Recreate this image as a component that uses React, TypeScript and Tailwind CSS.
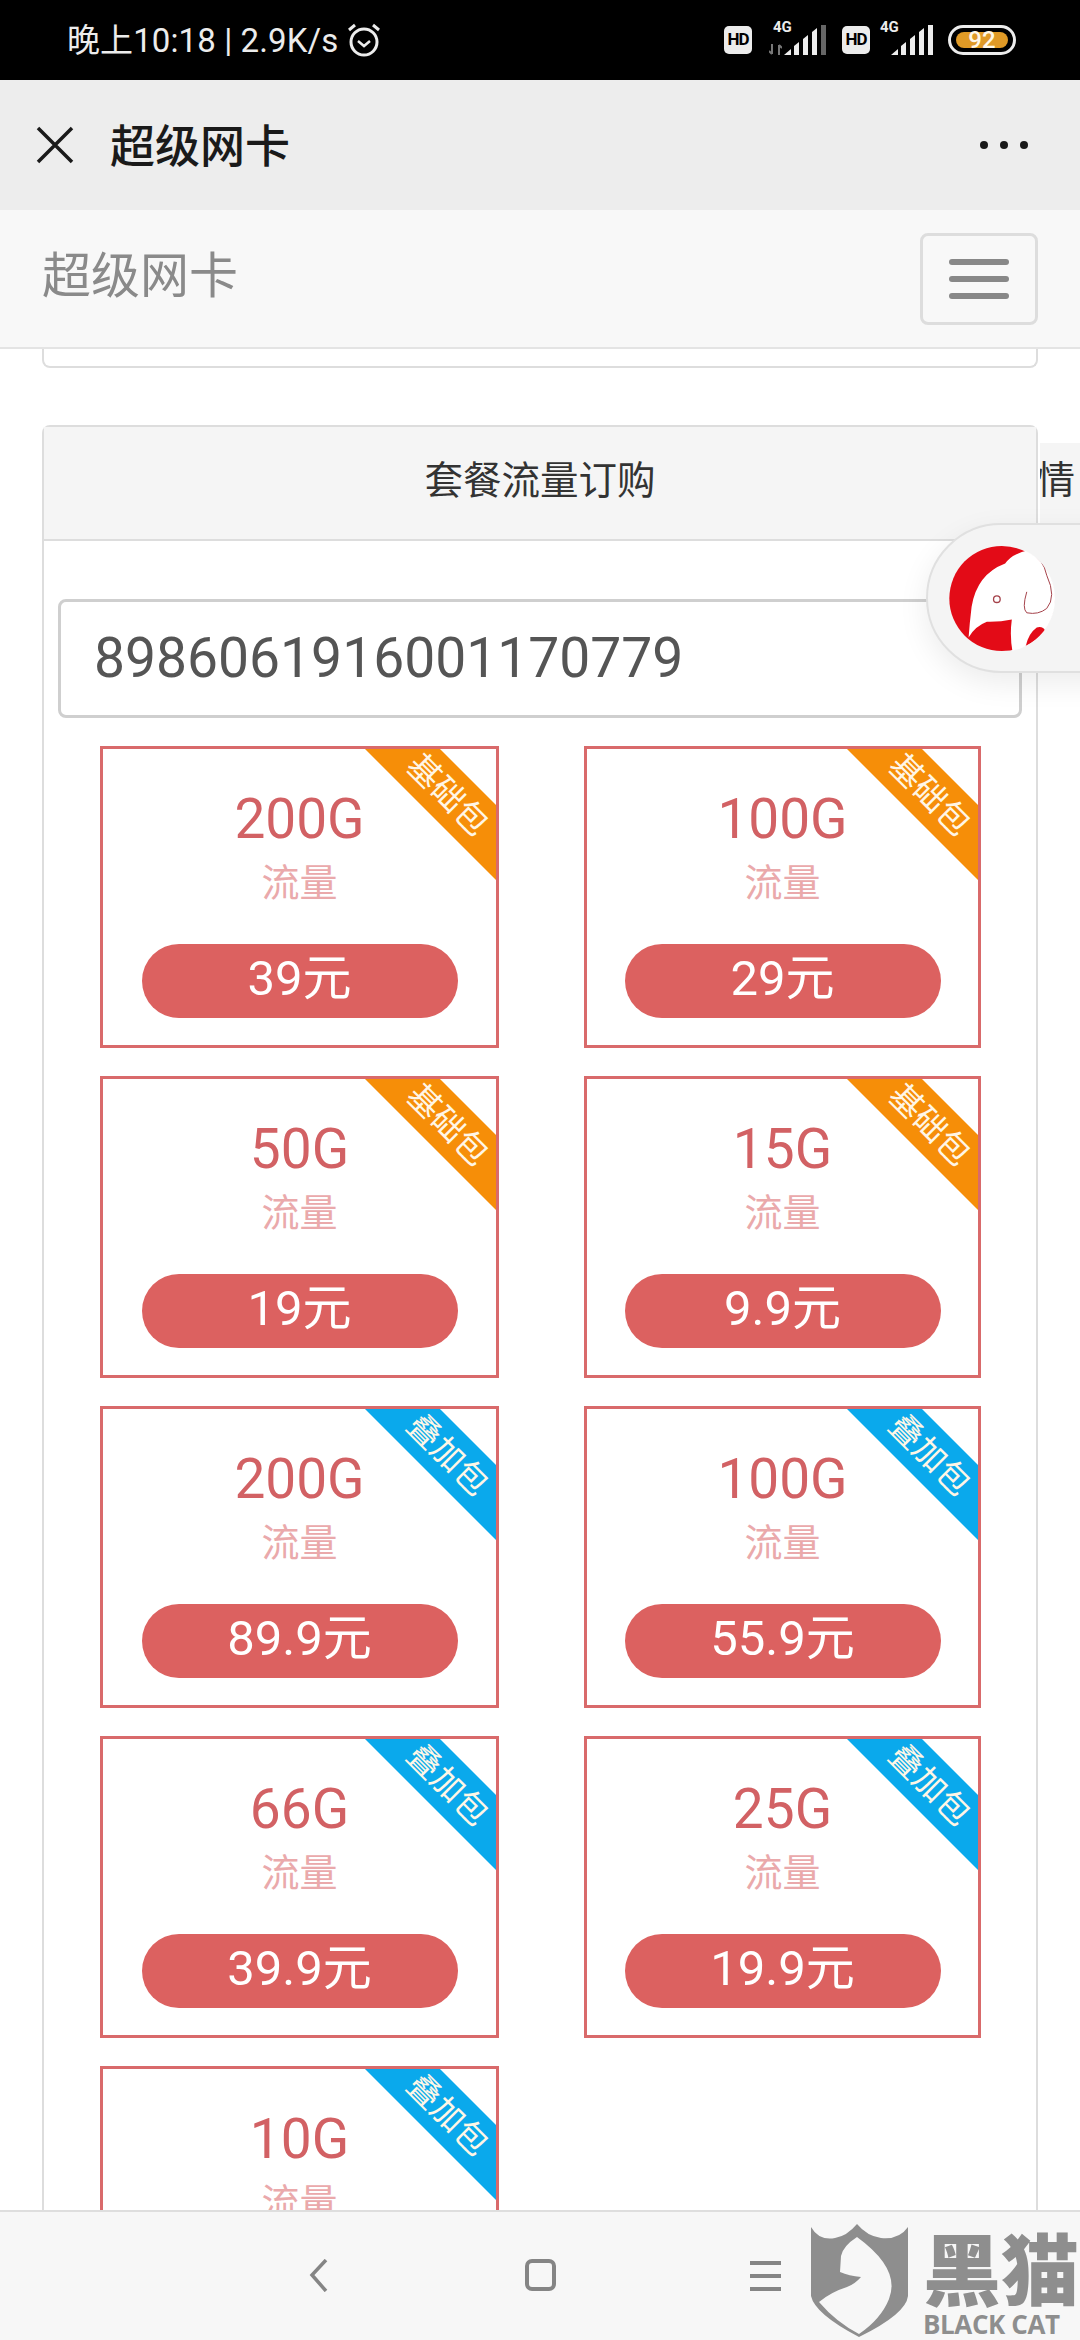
import React from 'react';

type Plan = {
  size: string;
  price: string;
  kind: 'base' | 'extra';
};

const plans: Plan[] = [
  { size: '200G', price: '39元', kind: 'base' },
  { size: '100G', price: '29元', kind: 'base' },
  { size: '50G', price: '19元', kind: 'base' },
  { size: '15G', price: '9.9元', kind: 'base' },
  { size: '200G', price: '89.9元', kind: 'extra' },
  { size: '100G', price: '55.9元', kind: 'extra' },
  { size: '66G', price: '39.9元', kind: 'extra' },
  { size: '25G', price: '19.9元', kind: 'extra' },
  { size: '10G', price: '19.9元', kind: 'extra' },
];

const font = "font-['Roboto','Noto_Sans_CJK_SC',sans-serif]";

// 信号格
const Signal = ({ dim }: { dim?: boolean }) => (
  <svg width="42" height="30" viewBox="0 0 42 30" fill="#ececec">
    <path d="M0 30 L7 24 V30 Z" />
    <path d="M10 21 L15 17 V30 H10 Z" />
    <path d="M19 14 L24 10 V30 H19 Z" />
    <path d="M28 7 L33 3 V30 H28 Z" />
    <path d="M37 0 H42 V30 H37 Z" fill={dim ? '#666666' : '#ececec'} />
  </svg>
);

const HdBadge = () => (
  <div className="flex h-[28px] w-[28px] items-center justify-center rounded-[5px] bg-[#ececec] font-['Roboto',sans-serif] text-[17px] font-bold tracking-[-1px] text-black">
    HD
  </div>
);

const StatusBar = () => (
  <div className={`flex h-[80px] shrink-0 items-center bg-black pl-[67px] pr-[64px] text-[#ececec] ${font}`}>
    <span className="whitespace-nowrap pt-[2px] text-[33px] tracking-[0.1px]">晚上10:18 | 2.9K/s</span>
    <svg className="ml-[8px]" width="36" height="36" viewBox="0 0 36 36" fill="none" stroke="#ececec" strokeWidth="3">
      <circle cx="18" cy="20" r="13" />
      <path d="M12 19 L18 24 L24 19" strokeWidth="2.5" />
      <path d="M3 8 L9 3 M33 8 L27 3" />
    </svg>
    <div className="ml-auto flex items-center">
      <HdBadge />
      <div className="relative ml-[17px] h-[30px] w-[57px]">
        <span className="absolute left-[4px] top-[-5px] font-['Roboto',sans-serif] text-[15px] font-bold leading-[15px]">4G</span>
        <svg className="absolute bottom-0 left-0" width="13" height="11" viewBox="0 0 13 11" stroke="#777777" strokeWidth="2" fill="none">
          <path d="M3 0 V10 M0 7 L3 10 M10 11 V1 M13 4 L10 1" />
        </svg>
        <div className="absolute right-0 top-0">
          <Signal dim />
        </div>
      </div>
      <div className="ml-[16px]">
        <HdBadge />
      </div>
      <div className="relative ml-[10px] h-[30px] w-[53px]">
        <span className="absolute left-0 top-[-5px] font-['Roboto',sans-serif] text-[15px] font-bold leading-[15px]">4G</span>
        <div className="absolute right-0 top-0">
          <Signal />
        </div>
      </div>
      <div className="ml-[15px] flex h-[30px] w-[68px] items-center rounded-full border-[3px] border-[#ececec] px-[5px]">
        <div className="flex h-[16px] w-[53px] items-center justify-center rounded-full bg-[#e09a26] font-['Roboto',sans-serif] text-[24px] font-medium text-[#fff8e8]">
          92
        </div>
      </div>
    </div>
  </div>
);

const WechatBar = () => (
  <div className={`flex h-[130px] shrink-0 items-center bg-[#ededed] pl-[36px] pr-[52px] ${font}`}>
    <svg width="38" height="38" viewBox="0 0 38 38" stroke="#1a1a1a" strokeWidth="3.5" fill="none">
      <path d="M2 2 L36 36 M36 2 L2 36" />
    </svg>
    <span className="ml-[36px] pt-[5px] text-[45px] font-medium leading-none text-[#1a1a1a]">超级网卡</span>
    <div className="ml-auto flex gap-[12px]">
      <span className="h-[8px] w-[8px] rounded-full bg-[#1a1a1a]" />
      <span className="h-[8px] w-[8px] rounded-full bg-[#1a1a1a]" />
      <span className="h-[8px] w-[8px] rounded-full bg-[#1a1a1a]" />
    </div>
  </div>
);

const NavBar = () => (
  <div className={`flex h-[139px] shrink-0 items-center justify-between border-b-2 border-[#e4e4e4] bg-[#f8f8f8] pl-[42px] pr-[42px] ${font}`}>
    <span className="pb-[5px] text-[49px] leading-none text-[#8a8a8a]">超级网卡</span>
    <div className="flex h-[92px] w-[118px] flex-col items-center justify-center gap-[11px] rounded-[8px] border-[3px] border-[#dddddd]">
      <span className="h-[6px] w-[60px] rounded-full bg-[#888888]" />
      <span className="h-[6px] w-[60px] rounded-full bg-[#888888]" />
      <span className="h-[6px] w-[60px] rounded-full bg-[#888888]" />
    </div>
  </div>
);

const Ribbon = ({ kind }: { kind: Plan['kind'] }) => (
  <div
    className={`absolute right-[-52px] top-[19px] flex h-[53px] w-[200px] rotate-45 items-center justify-center text-[33px] leading-none text-[#fff6e6] ${
      kind === 'base' ? 'bg-[#f68e08]' : 'bg-[#0aa9ec]'
    }`}
  >
    {kind === 'base' ? '基础包' : '叠加包'}
  </div>
);

const PlanCard = ({ plan }: { plan: Plan }) => (
  <div className="relative flex h-[302px] flex-col items-center overflow-hidden border-[3px] border-[#d96a6b] pt-[40px]">
    <Ribbon kind={plan.kind} />
    <div className="text-[55px] leading-[60px] text-[#d26164]">{plan.size}</div>
    <div className="mt-[12px] text-[38px] leading-[44px] text-[#eaa9ab]">流量</div>
    <div className="mt-[39px] flex h-[74px] w-[316px] shrink-0 items-center justify-center rounded-full bg-[#dc6160] pb-[5px] text-[49px] leading-none text-white">
      {plan.price}
    </div>
  </div>
);

// 悬浮按钮里的大象图标
const ElephantButton = () => (
  <div className="absolute right-[-40px] top-[523px] flex h-[150px] w-[194px] items-center rounded-l-full border-2 border-[#e0e0e0] bg-[#f4f4f4] pl-[19px] shadow-[0_10px_30px_rgba(0,0,0,0.08)]">
    <svg width="113" height="117" viewBox="200 120 340 350">
      <defs>
        <clipPath id="logoClip">
          <circle cx="365" cy="295" r="160" />
        </clipPath>
      </defs>
      <circle cx="365" cy="295" r="158" fill="#e30b17" />
      <g clipPath="url(#logoClip)">
        <path
          d="M445 150 Q395 160 375 190 Q290 222 274 320 Q268 370 265 412 Q285 378 320 365 Q360 366 395 358 Q388 410 398 460 L540 460 L540 140 Z"
          fill="#ffffff"
        />
        <path d="M437 438 Q445 400 470 382 Q490 378 495 392 Q475 418 437 438 Z" fill="#e30b17" />
        <path
          d="M445 150 Q490 175 500 225 Q530 290 500 325 Q475 345 440 338 Q425 325 440 275"
          fill="none"
          stroke="#a5424a"
          strokeWidth="3"
        />
      </g>
      <circle cx="350" cy="297" r="10" fill="#ffffff" stroke="#a5424a" strokeWidth="4" />
    </svg>
  </div>
);

const Watermark = () => (
  <div className="absolute bottom-[2px] left-[811px] flex text-[#8e8e8e]">
    <svg width="97" height="113" viewBox="0 0 97 113">
      <path d="M0 3 Q8 17 24 14 Q36 12 46 0 Q56 12 70 14 Q88 16 97 3 L97 72 Q95 90 48 113 Q4 90 0 72 Z" fill="#8e8e8e" />
      <path
        d="M46 13 Q32 22 30 32 L29 48 Q38 52 50 53 Q44 60 36 63 Q20 68 8 78 Q25 98 48 110 Q70 95 78 75 Q90 45 46 13 Z"
        fill="#f7f7f7"
      />
    </svg>
    <div className="ml-[15px] flex w-[156px] flex-col">
      <span className="whitespace-nowrap font-['Noto_Sans_CJK_SC',sans-serif] text-[78px] font-black leading-[84px]">黑猫</span>
      <span className="mt-[2px] whitespace-nowrap font-['Open_Sans',sans-serif] text-[26px] font-bold leading-[28px] tracking-[-0.4px]">BLACK CAT</span>
    </div>
  </div>
);

const BottomBar = () => (
  <div className="relative flex h-[130px] shrink-0 items-start border-t-2 border-[#dedede] bg-[#f7f7f7] pt-[47px]">
    <svg className="ml-[309px]" width="20" height="33" viewBox="0 0 20 33" fill="none" stroke="#858585" strokeWidth="3.5">
      <path d="M17 1 L3 16 L17 32" />
    </svg>
    <div className="ml-[196px] h-[32px] w-[31px] rounded-[7px] border-[4px] border-[#858585]" />
    <div className="ml-[194px] mt-[2px] flex flex-col gap-[9px]">
      <span className="h-[4px] w-[31px] bg-[#858585]" />
      <span className="h-[4px] w-[31px] bg-[#858585]" />
      <span className="h-[4px] w-[31px] bg-[#858585]" />
    </div>
    <Watermark />
  </div>
);

const App = () => {
  return (
    <div className={`relative flex h-[2340px] w-[1080px] flex-col overflow-hidden bg-white ${font}`}>
      <StatusBar />
      <WechatBar />
      <NavBar />

      <main className="min-h-0 flex-1 overflow-hidden px-[42px]">
        <div className="h-[19px] rounded-b-[8px] border-x-2 border-b-2 border-[#dddddd]" />

        <div className="mt-[57px] rounded-t-[8px] border-x-2 border-t-2 border-[#dddddd] pb-[40px]">
          <div className="flex h-[114px] items-center justify-center border-b-2 border-[#dddddd] bg-[#f5f5f5] pb-[5px] text-[38.5px] text-[#333333]">
            套餐流量订购
          </div>

          <div className="mx-[14px] mt-[58px] flex h-[119px] items-center rounded-[8px] border-[3px] border-[#cfcfcf] px-[33px] font-['Roboto',sans-serif] text-[55.2px] text-[#555555]">
            8986061916001170779
          </div>

          <div className="ml-[56px] mt-[28px] grid grid-cols-[399px_397px] gap-x-[85px] gap-y-[28px]">
            {plans.map((plan, index) => (
              <PlanCard key={index} plan={plan} />
            ))}
          </div>
        </div>
      </main>

      <BottomBar />

      {/* 右侧露出的下一屏标题 */}
      <div className="absolute right-0 top-[443px] h-[120px] w-[40px] overflow-hidden bg-[#f5f5f5] pt-[13px] text-[38px] leading-[48px] text-[#333333]">
        <span className="ml-[-3px] whitespace-nowrap">情</span>
      </div>
      <ElephantButton />
    </div>
  );
};

export default App;
